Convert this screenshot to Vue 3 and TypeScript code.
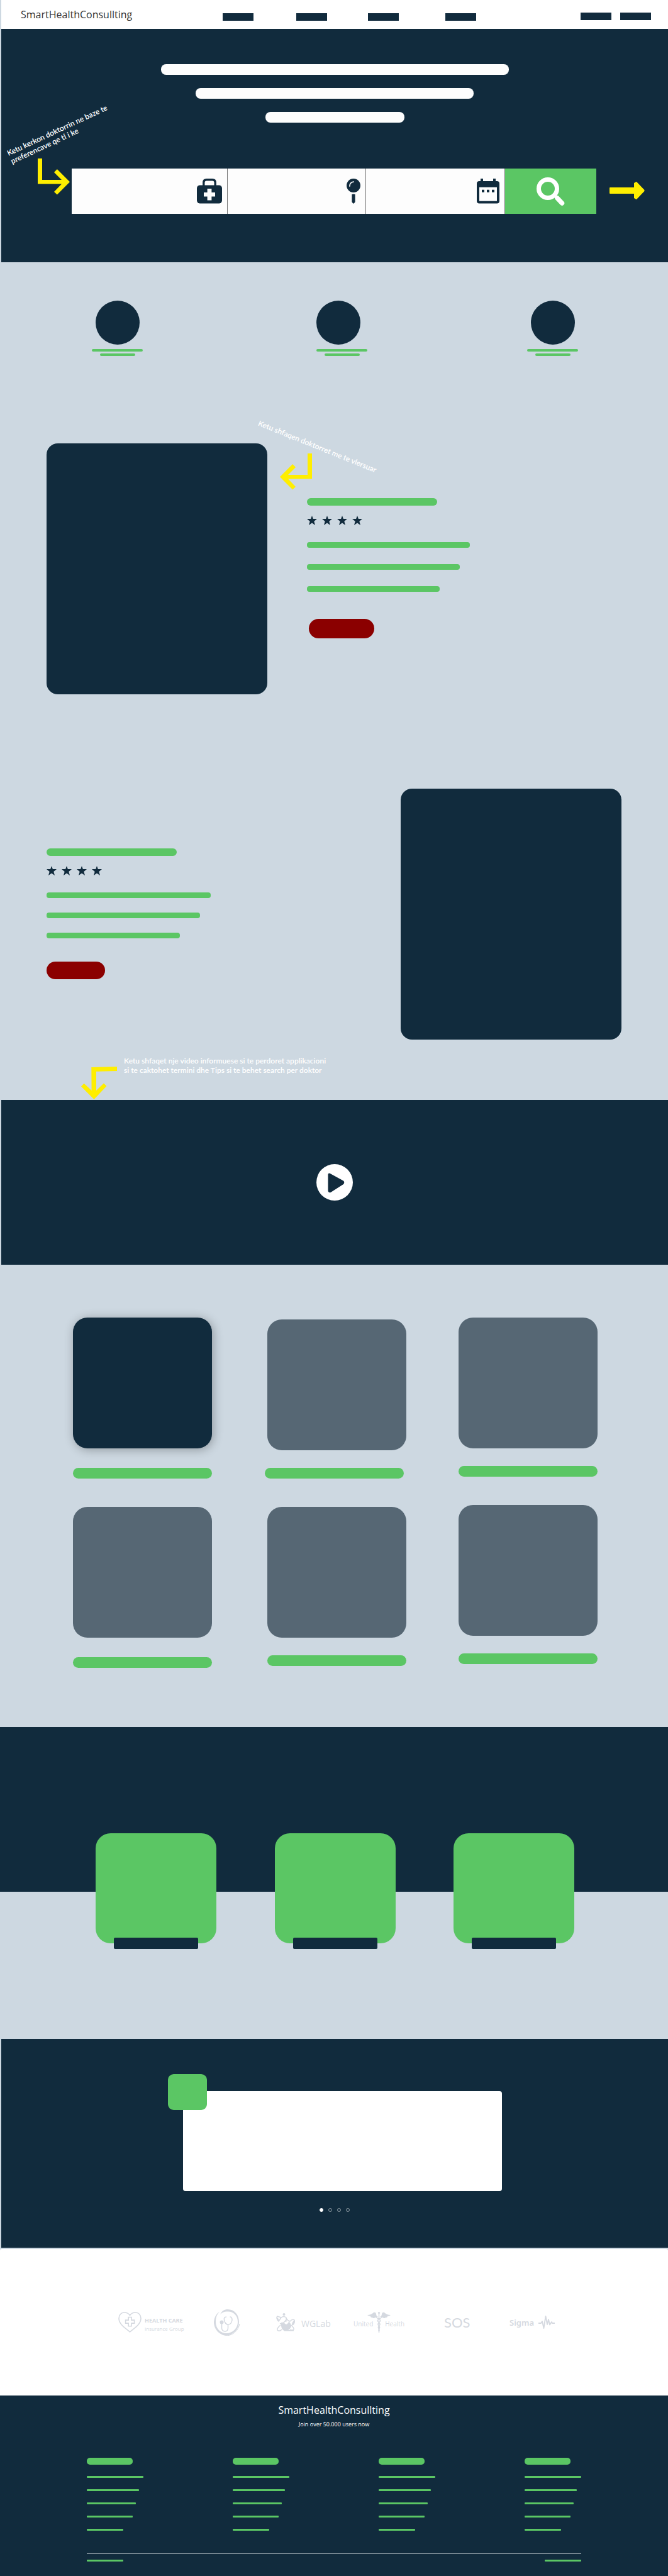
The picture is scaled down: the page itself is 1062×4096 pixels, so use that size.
<script setup lang="ts">
import { ref } from 'vue'

interface Doctor {
  id: string
  lines: number[]
  stars: number
}

const navLinks = ['Home', 'Doctors', 'Services', 'Contact']
const headlineWidths = [553, 442, 221]
const features = ['Search', 'Book', 'Consult']
const doctors: Doctor[] = [
  { id: 'first', lines: [259, 243, 211], stars: 4 },
  { id: 'second', lines: [261, 244, 212], stars: 4 },
]
const galleryColumns = ['left', 'middle', 'right']
const stats = ['Patients', 'Doctors', 'Clinics']
const slides = [0, 1, 2, 3]
const activeSlide = ref(0)
const footerColumns = ['Company', 'Patients', 'Doctors', 'Support']
const footerLinkWidths = [90, 83, 78, 73, 58]
</script>

<template>
  <div class="page">
    <header class="topbar">
      <a class="brand" href="#">SmartHealthConsullting</a>
      <nav class="menu" aria-label="Main">
        <a v-for="l in navLinks" :key="l" class="block" href="#" :aria-label="l"></a>
      </nav>
      <div class="account">
        <button class="block" type="button" aria-label="Log in"></button>
        <button class="block" type="button" aria-label="Sign up"></button>
      </div>
    </header>

    <section class="hero">
      <div class="headline">
        <span v-for="w in headlineWidths" :key="w" class="headline-bar" :style="{ width: w + 'px' }"></span>
      </div>

      <form class="search" @submit.prevent>
        <label class="field">
          <input type="text" aria-label="Speciality" />
          <svg width="40" height="40" viewBox="0 0 40 40" aria-hidden="true">
            <path d="M10.800 12V6.500Q10.800 1.750 15.500 1.750H24.500Q29.200 1.750 29.200 6.500V12" fill="none" stroke="#112b3d" stroke-width="3.400" />
            <rect y="10.400" width="40" height="29.200" rx="5" fill="#112b3d" />
            <path d="M16.600 16h6.800v5.900H29v6.700h-5.600v5.900h-6.800v-5.900H11v-6.700h5.600z" fill="#fdfdfd" />
          </svg>
        </label>
        <label class="field">
          <input type="text" aria-label="Location" />
          <svg width="22" height="40" viewBox="0 0 22 40" aria-hidden="true">
            <circle cx="11" cy="11" r="11" fill="#112b3d" />
            <path d="M4.900 12Q5 5.800 11.200 5" fill="none" stroke="#fdfdfd" stroke-width="1.700" stroke-linecap="round" />
            <path d="M8.400 25Q11 24 13.600 25V37L11.800 39.500H10.200L8.400 37z" fill="#112b3d" />
          </svg>
        </label>
        <label class="field">
          <input type="text" aria-label="Date" />
          <svg width="36" height="40" viewBox="0 0 36 40" aria-hidden="true">
            <path d="M6 0h4v6H6zM26 0h4v6h-4z" fill="#112b3d" />
            <rect y="4" width="36" height="35.600" rx="4" fill="#112b3d" />
            <rect x="4" y="13.700" width="28" height="22" fill="#fdfdfd" />
            <path d="M8 17.700h4v4H8zM16 17.700h4v4h-4zM24 17.700h4v4h-4z" fill="#112b3d" />
          </svg>
        </label>
        <button class="search-go" type="submit" aria-label="Search">
          <svg width="45" height="45" viewBox="0 0 45 45" aria-hidden="true">
            <circle cx="18" cy="18" r="14.500" fill="none" stroke="#fff" stroke-width="7" />
            <path d="M28 28L37 37" stroke="#fff" stroke-width="5" />
            <path d="M33 33L40.500 41" stroke="#fff" stroke-width="7.500" stroke-linecap="round" />
          </svg>
        </button>
      </form>

      <p class="note note-search">Ketu kerkon doktorrin ne baze te<br />preferencave qe ti i ke</p>
      <svg class="arrow-in" width="51" height="58" viewBox="0 0 51 58" aria-hidden="true">
        <path d="M0 0H7V34H38L26 22L30.800 17L51 37.300L30.800 57.500L26 53L38 40.400H0z" fill="#ffee00" />
      </svg>
      <svg class="arrow-out" width="56" height="28" viewBox="0 0 56 28" aria-hidden="true">
        <path d="M1 10H40V2.500L42.500 1L54.500 13.500V14.500L42.500 27L40 25.500V18H1z" fill="#ffee00" stroke="#ffee00" stroke-width="2" stroke-linejoin="round" />
      </svg>
    </section>

    <section class="features">
      <div v-for="f in features" :key="f" class="feature">
        <span class="feature-dot"></span>
        <span class="feature-title"></span>
        <span class="feature-text"></span>
      </div>
    </section>

    <section class="doctors">
      <article v-for="d in doctors" :key="d.id" class="doctor" :class="d.id">
        <div class="portrait"></div>
        <div class="info">
          <div class="info-name"></div>
          <div class="stars" role="img" aria-label="4 stars">
            <svg v-for="s in d.stars" :key="s" width="16" height="15" viewBox="0 0 16 15" aria-hidden="true">
              <path d="M8 0L9.900 5H16L11.300 8.900L13 15L8 11.500L3 15L4.700 8.900L0 5H6.100z" fill="#112b3d" />
            </svg>
          </div>
          <div class="info-lines">
            <span v-for="w in d.lines" :key="w" class="info-line" :style="{ width: w + 'px' }"></span>
          </div>
          <button class="cta" type="button" aria-label="Book"></button>
        </div>
      </article>
      <p class="note note-doctors">Ketu shfaqen doktorret me te vlersuar</p>
      <svg class="arrow-left" width="51" height="58" viewBox="0 0 51 58" aria-hidden="true">
        <path d="M51 0H44V34H13L25 22L20.200 17L0 37.300L20.200 57.500L25 53L13 40.400H51z" fill="#ffee00" />
      </svg>
    </section>

    <div class="video-note">
      <svg width="57" height="52" viewBox="0 0 57 52" aria-hidden="true">
        <path d="M16.300 1L57 0V7L24 7.800V38L36 26.400L40.400 31L20.500 52L0 31.400L4.600 26.800L16.600 38z" fill="#ffee00" />
      </svg>
      <p class="note">Ketu shfaqet nje video informuese si te perdoret applikacioni<br />si te caktohet termini dhe Tips si te behet search per doktor</p>
    </div>

    <section class="video">
      <button class="play" type="button" aria-label="Play video">
        <svg width="58" height="58" viewBox="0 0 58 58" aria-hidden="true">
          <circle cx="29" cy="29" r="29" fill="#fff" />
          <path d="M20.500 16.500L41.500 28Q43 29 41.500 30.500L22 43Q20.500 43.500 20.500 42z" fill="#112b3d" stroke="#112b3d" stroke-width="4" stroke-linejoin="round" />
        </svg>
      </button>
    </section>

    <section class="gallery">
      <div v-for="c in galleryColumns" :key="c" class="column" :class="c">
        <figure v-for="n in 2" :key="n" class="tile">
          <div class="tile-image"></div>
          <figcaption class="tile-caption"></figcaption>
        </figure>
      </div>
    </section>

    <section class="stats">
      <article v-for="s in stats" :key="s" class="stat">
        <button class="stat-button" type="button" :aria-label="s"></button>
      </article>
    </section>

    <section class="testimonials">
      <div class="quote-wrap">
        <div class="quote"></div>
        <div class="avatar"></div>
      </div>
      <div class="dots">
        <button
          v-for="s in slides"
          :key="s"
          class="dot"
          :class="{ active: s === activeSlide }"
          type="button"
          :aria-label="'Slide ' + (s + 1)"
          @click="activeSlide = s"
        ></button>
      </div>
    </section>

    <section class="partners">
      <div class="partner care">
        <svg width="37" height="33" viewBox="0 0 37 33" aria-hidden="true">
          <path d="M18.500 32C12 26 1 20 1 10.500C1 4.500 5 1 9.500 1C13.500 1 16.500 2.500 18.500 5.500C20.500 2.500 23.500 1 27.500 1C32 1 36 4.500 36 10.500C36 20 25 26 18.500 32z" fill="none" stroke="#d5d9e0" stroke-width="1.600" />
          <path d="M16.200 8.500h4.800v4.600h4.600v5h-4.600v4.600h-4.800v-4.600h-4.600v-5h4.600z" fill="none" stroke="#d5d9e0" stroke-width="1.600" />
        </svg>
        <div class="care-text">
          <strong>HEALTH CARE</strong>
          <span>Insurance Group</span>
        </div>
      </div>
      <div class="partner">
        <svg width="42" height="42" viewBox="0 0 42 42" aria-hidden="true">
          <path fill-rule="evenodd" d="M22 0C33 0 40 9 40 20C40 32 31 40 20 42C9 41 0 32 0 20C1 11 5 6 9 4C4 9 3 14 3 20C3 31 11 38 20 38C30 38 38 30 38 20C38 10 31 3 22 3.500C17 3 13 5 10 8C13 2 17 0 22 0z" fill="#d5d9e0" />
          <path d="M41 23C39 33 31 41 21 42" fill="none" stroke="#d5d9e0" stroke-width="1" />
          <circle cx="12.500" cy="20.500" r="3" fill="#d5d9e0" />
          <path d="M12.500 22V30Q13 35 18 35Q22 35 22.500 30V24M20 12Q15.500 12 16.500 17Q18 24 22.500 24Q28 24 29 17Q29 12 25.500 12" fill="none" stroke="#d5d9e0" stroke-width="1.500" />
        </svg>
      </div>
      <div class="partner lab">
        <svg width="31" height="29" viewBox="0 0 31 29" aria-hidden="true">
          <circle cx="12.500" cy="2" r="2" fill="#d5d9e0" />
          <path d="M8 7L2 5Q0 7 2 10L4 13L8 7Q12 4 16 7V11L12 15L6 17M16 8Q18 12 22 13Q26 9 29 11Q30 16 26 19M9 15L8 18M7 19Q1 24 2 27Q5 30 9 26M24 19Q29 24 28 26Q25 28 22 26" fill="none" stroke="#d5d9e0" stroke-width="1.500" />
          <path d="M1 6Q6 10 3 13Q0 11 1 6zM29 11Q31 18 25 19Q25 14 29 11z" fill="#d5d9e0" />
          <circle cx="15.500" cy="12.500" r="1.300" fill="#d5d9e0" />
          <path d="M8 16Q13 15 16 18Q20 16 20 13Q24 17 24 21Q22 26 19 27H28V28.500H13Q7 25 8 16z" fill="#d5d9e0" />
        </svg>
        <span>WGLab</span>
      </div>
      <div class="partner united">
        <span>United</span>
        <svg width="37" height="34" viewBox="0 0 37 34" aria-hidden="true">
          <circle cx="18.500" cy="1.600" r="1.600" fill="#d5d9e0" />
          <path d="M17 8Q14 7 14 3Q13 0 10 1Q6 5 0 5Q2 7 5 7Q5 9 8 9Q9 11 13 9Q15 8 17 8zM20 8Q23 7 23 3Q24 0 27 1Q31 5 37 5Q35 7 32 7Q32 9 29 9Q28 11 24 9Q22 8 20 8z" fill="#d5d9e0" />
          <path d="M18.500 3V33" stroke="#d5d9e0" stroke-width="1.500" />
          <path d="M14 7Q14 10 18.500 11Q23 14 18.500 17Q15 20 18.500 22Q21 25 18.500 27Q17 29 18.500 31M23 7Q23 10 18.500 11Q14 14 18.500 17Q22 20 18.500 22Q16 25 18.500 27Q20 29 18.500 31" fill="none" stroke="#d5d9e0" stroke-width="1.300" />
        </svg>
        <span>Health</span>
      </div>
      <div class="partner sos">SOS</div>
      <div class="partner sigma">
        <span>Sigma</span>
        <svg width="26" height="21" viewBox="0 0 26 21" aria-hidden="true">
          <path d="M0 12H4L6 9L8.500 20L11.500 1L14 14L16 6L18 14.500L21 10L22 12H26" fill="none" stroke="#d5d9e0" stroke-width="1.800" stroke-linejoin="round" />
        </svg>
      </div>
    </section>

    <footer class="footer">
      <a class="footer-brand" href="#">SmartHealthConsullting</a>
      <p class="footer-sub">Join over 50.000 users now</p>
      <div class="footer-columns">
        <nav v-for="c in footerColumns" :key="c" class="footer-column" :aria-label="c">
          <span class="footer-heading"></span>
          <a
            v-for="w in footerLinkWidths"
            :key="w"
            class="footer-link"
            href="#"
            :aria-label="c"
            :style="{ width: w + 'px' }"
          ></a>
        </nav>
      </div>
      <div class="footer-bottom">
        <a class="footer-link legal" href="#" aria-label="Copyright"></a>
        <a class="footer-link legal" href="#" aria-label="Terms"></a>
      </div>
    </footer>
  </div>
</template>

<style>
body {
  margin: 0;
  background: #cdd8e1;
}
</style>

<style scoped>
.page {
  --navy: #112b3d;
  --green: #5bc664;
  --logo: #d5d9e0;
  background: #cdd8e1;
  font-family: "Open Sans", "Noto Sans", sans-serif;
  overflow: hidden;
}

button {
  border: 0;
  padding: 0;
  cursor: pointer;
}

svg {
  display: block;
  flex: none;
}

a {
  text-decoration: none;
}

/* Top bar */
.topbar {
  display: grid;
  grid-template-columns: 321fr 569fr 112px;
  align-items: center;
  min-height: 46px;
  margin-left: 2px;
  padding: 0 27px 0 31px;
  background: #fff;
}

.brand {
  font-size: 16px;
  line-height: 20px;
  color: #333;
}

.menu {
  display: grid;
  grid-template-columns: 117px 114px 123px 49px;
  padding-top: 7px;
}

.account {
  display: flex;
  justify-content: space-between;
  padding-top: 6px;
}

.block {
  width: 49px;
  height: 12px;
  background: var(--navy);
}

/* Hero */
.hero {
  position: relative;
  margin-left: 2px;
  padding: 56px 0 77px;
  background: var(--navy);
}

.headline {
  display: flex;
  flex-direction: column;
  align-items: center;
  gap: 21px;
}

.headline-bar {
  height: 17px;
  border-radius: 8px;
  background: #fdfdfd;
}

.search {
  display: grid;
  grid-template-columns: 248fr 220fr 221fr 145fr;
  height: 72px;
  margin: 73px 114px 0 112px;
  background: #fdfdfd;
}

.field {
  display: flex;
  align-items: center;
  min-width: 0;
  padding-right: 8px;
  border-right: 1px solid #777;
}

.field input {
  flex: 1;
  min-width: 0;
  height: 40px;
  padding: 0 12px;
  border: 0;
  background: transparent;
}

.search-go {
  display: flex;
  align-items: center;
  justify-content: center;
  background: var(--green);
}

.note {
  margin: 0;
  font-family: Lato, "Open Sans", sans-serif;
  font-size: 12px;
  font-weight: 600;
  line-height: 15px;
  white-space: nowrap;
  color: #fff;
}

.note-search {
  position: absolute;
  left: 7px;
  top: 192px;
  line-height: 14px;
  transform: rotate(-25deg);
  transform-origin: 0 0;
}

.arrow-in {
  position: absolute;
  left: 58px;
  top: 206px;
}

.arrow-out {
  position: absolute;
  right: 37px;
  top: 243px;
}

/* Features */
.features {
  display: grid;
  grid-template-columns: 357fr 335fr 81px;
  padding: 61px 143px 0 146px;
}

.feature {
  display: flex;
  flex-direction: column;
  align-items: center;
  width: 81px;
}

.feature-dot {
  width: 70px;
  height: 70px;
  border-radius: 50%;
  background: var(--navy);
}

.feature:nth-child(2) .feature-dot {
  align-self: flex-start;
}

.feature-title {
  width: 81px;
  height: 4px;
  margin-top: 7px;
  border-radius: 2px;
  background: var(--green);
}

.feature-text {
  width: 56px;
  height: 4px;
  margin-top: 3px;
  border-radius: 2px;
  background: var(--green);
}

/* Doctors */
.doctors {
  position: relative;
  display: flex;
  flex-direction: column;
  gap: 150px;
  padding: 139px 74px 0;
}

.doctor {
  display: flex;
  gap: 63px;
}

.doctor.second {
  flex-direction: row-reverse;
  justify-content: space-between;
}

.portrait {
  flex: none;
  width: 351px;
  height: 399px;
  border-radius: 18px;
  background: var(--navy);
}

.info {
  padding-top: 87px;
}

.second .info {
  padding-top: 95px;
}

.info-name {
  width: 207px;
  height: 12px;
  border-radius: 6px;
  background: var(--green);
}

.stars {
  display: flex;
  gap: 8px;
  margin-top: 16px;
}

.info-lines {
  display: flex;
  flex-direction: column;
  gap: 26px;
  margin-top: 27px;
}

.second .info-lines {
  gap: 23px;
}

.info-line {
  height: 9px;
  border-radius: 4px;
  background: var(--green);
}

.cta {
  display: block;
  width: 104px;
  height: 31px;
  margin: 43px 0 0 3px;
  border-radius: 16px;
  background: #8b0000;
}

.second .cta {
  width: 93px;
  height: 28px;
  margin: 37px 0 0;
}

.note-doctors {
  position: absolute;
  left: 414px;
  top: 99px;
  transform: rotate(22deg);
  transform-origin: 0 0;
}

.arrow-left {
  position: absolute;
  left: 445px;
  top: 155px;
}

/* Video */
.video-note {
  display: flex;
  align-items: flex-end;
  gap: 11px;
  padding: 26px 0 1px 129px;
}

.video-note .note {
  padding-bottom: 39px;
}

.video {
  display: flex;
  align-items: center;
  justify-content: center;
  min-height: 262px;
  margin-left: 2px;
  background: var(--navy);
}

.play {
  border-radius: 50%;
  background: transparent;
}

/* Gallery */
.gallery {
  display: flex;
  justify-content: space-between;
  padding: 84px 112px 94px 116px;
}

.column {
  display: flex;
  flex-direction: column;
  gap: 45px;
  width: 221px;
}

.column.middle {
  width: 225px;
  padding-top: 3px;
}

.tile {
  display: flex;
  flex-direction: column;
  align-items: flex-end;
  gap: 28px;
  margin: 0;
}

.left .tile {
  gap: 31px;
}

.tile-image {
  width: 221px;
  height: 208px;
  border-radius: 23px;
  background: #566774;
}

.left .tile:first-child .tile-image {
  background: var(--navy);
  box-shadow: 2px 2px 16px rgba(0, 0, 0, 0.3);
}

.tile-caption {
  width: 221px;
  height: 17px;
  border-radius: 9px;
  background: var(--green);
}

.middle .tile:first-child .tile-caption {
  align-self: flex-start;
}

/* Stats */
.stats {
  display: flex;
  justify-content: space-between;
  padding: 169px 149px 152px 152px;
  background: linear-gradient(var(--navy) 262px, transparent 262px);
}

.stat {
  display: flex;
  align-items: flex-end;
  justify-content: center;
  width: 192px;
  height: 175px;
  border-radius: 24px;
  background: var(--green);
}

.stat-button {
  width: 134px;
  height: 18px;
  margin-bottom: -9px;
  border-radius: 2px;
  background: var(--navy);
}

/* Testimonials */
.testimonials {
  display: flex;
  flex-direction: column;
  align-items: center;
  margin-left: 2px;
  padding: 56px 0 57px;
  background: var(--navy);
}

.quote-wrap {
  position: relative;
  padding: 27px 0 0 24px;
}

.quote {
  width: 507px;
  height: 159px;
  border-radius: 4px;
  background: #fff;
}

.avatar {
  position: absolute;
  left: 0;
  top: 0;
  width: 62px;
  height: 57px;
  border-radius: 9px;
  background: var(--green);
}

.dots {
  display: flex;
  gap: 8px;
  margin-top: 27px;
}

.dot {
  width: 6px;
  height: 6px;
  border: 1px solid rgba(255, 255, 255, 0.5);
  border-radius: 50%;
  background: transparent;
}

.dot.active {
  border-color: #fff;
  background: #fff;
}

/* Partners */
.partners {
  display: grid;
  grid-template-columns: 152fr 99fr 123fr 144fr 104fr 74fr;
  align-items: center;
  min-height: 233px;
  margin-top: 2px;
  padding: 0 178px 0 188px;
  border-radius: 3px 3px 0 0;
  background: #fff;
  color: var(--logo);
}

.partner {
  display: flex;
  align-items: center;
  white-space: nowrap;
}

.care {
  gap: 5px;
}

.care-text {
  display: flex;
  flex-direction: column;
  padding-top: 6px;
  font-size: 9px;
  line-height: 13px;
}

.care-text span {
  font-size: 8px;
}

.lab {
  gap: 9px;
  font-size: 14px;
  line-height: 20px;
}

.lab span {
  padding-top: 5px;
}

.united {
  font-size: 10px;
  line-height: 14px;
}

.united svg {
  margin: 0 -9px;
}

.united span {
  padding-top: 5px;
}

.sos {
  font-family: Lato, sans-serif;
  font-size: 22px;
  line-height: 28px;
}

.sigma {
  gap: 7px;
  font-family: "Noto Sans", sans-serif;
  font-size: 13px;
  font-weight: 600;
  line-height: 20px;
}

/* Footer */
.footer {
  padding: 13px 138px 23px;
  background: var(--navy);
  text-align: center;
  color: #fff;
}

.footer-brand {
  display: block;
  font-size: 16px;
  line-height: 20px;
  color: #fff;
}

.footer-sub {
  margin: 6px 0 0;
  font-size: 9px;
  line-height: 14px;
}

.footer-columns {
  display: flex;
  justify-content: space-between;
  margin-top: 46px;
}

.footer-column {
  display: flex;
  flex-direction: column;
  gap: 18px;
  width: 90px;
}

.footer-heading {
  width: 73px;
  height: 11px;
  border-radius: 5px;
  background: var(--green);
}

.footer-link {
  height: 3px;
  border-radius: 1px;
  background: var(--green);
}

.footer-bottom {
  display: flex;
  justify-content: space-between;
  margin-top: 36px;
  padding-top: 9px;
  border-top: 1px solid #9aa6ae;
}

.legal {
  width: 58px;
}
</style>
